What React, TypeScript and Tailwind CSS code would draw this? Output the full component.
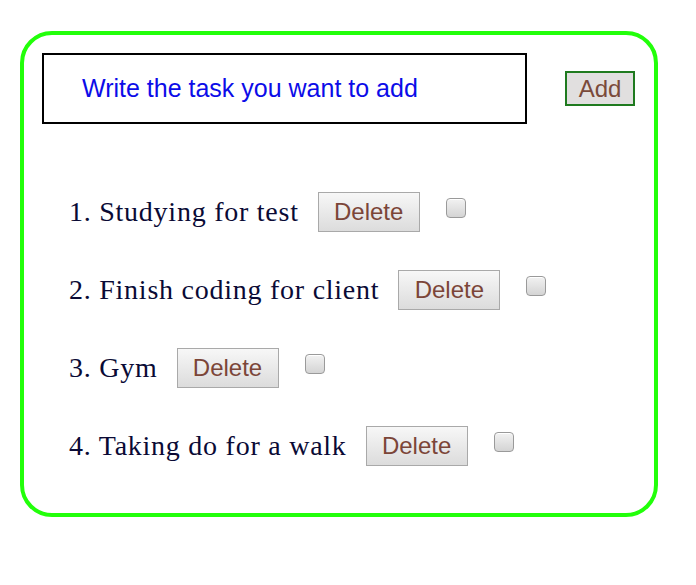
import React from "react";

const tasks = ["Studying for test", "Finish coding for client", "Gym", "Taking do for a walk"];

function Box() {
  return (
    <span className="mb-[9px] ml-[26px] inline-block h-[20px] w-[20px] rounded-[4px] border border-[#9a9a9a] bg-gradient-to-b from-[#f2f2f2] to-[#d4d4d4] shadow-[inset_0_1px_0_#fff]" />
  );
}

export default function App() {
  return (
    <div className="h-[585px] w-[696px] bg-white pl-[20px] pt-[31px]">
      <div className="h-[486px] w-[638px] rounded-[32px] border-4 border-[#22ff0a] px-[18px] pt-[18px]">
        <div className="flex items-start">
          <div className="flex h-[71px] w-[485px] items-center border-2 border-black pl-[38px] font-['Liberation_Sans',Arial,sans-serif] text-[25px] text-[#0c0ce8]">
            Write the task you want to add
          </div>
          <button className="ml-[38px] mt-[18px] h-[35px] w-[70px] border-2 border-[#1f7a1f] bg-[#e1dfdf] font-['Liberation_Sans',Arial,sans-serif] text-[24px] leading-none text-[#7a4a3a]">
            Add
          </button>
        </div>
        <ol className="mt-[68px] flex flex-col gap-[38px] pl-[27px] font-['Liberation_Serif','Times_New_Roman',serif] text-[28px] text-[#0a0a35]">
          {tasks.map((t, i) => (
            <li key={t} className="flex h-[40px] items-center">
              <span className="tracking-[0.75px]">{i + 1}. {t}</span>
              <button className="ml-[19px] h-[40px] w-[102px] border border-[#a9a9a9] bg-gradient-to-b from-[#f7f7f7] to-[#dcdcdc] font-['Liberation_Sans',Arial,sans-serif] text-[24px] leading-none text-[#7b4538]">
                Delete
              </button>
              <Box />
            </li>
          ))}
        </ol>
      </div>
    </div>
  );
}
